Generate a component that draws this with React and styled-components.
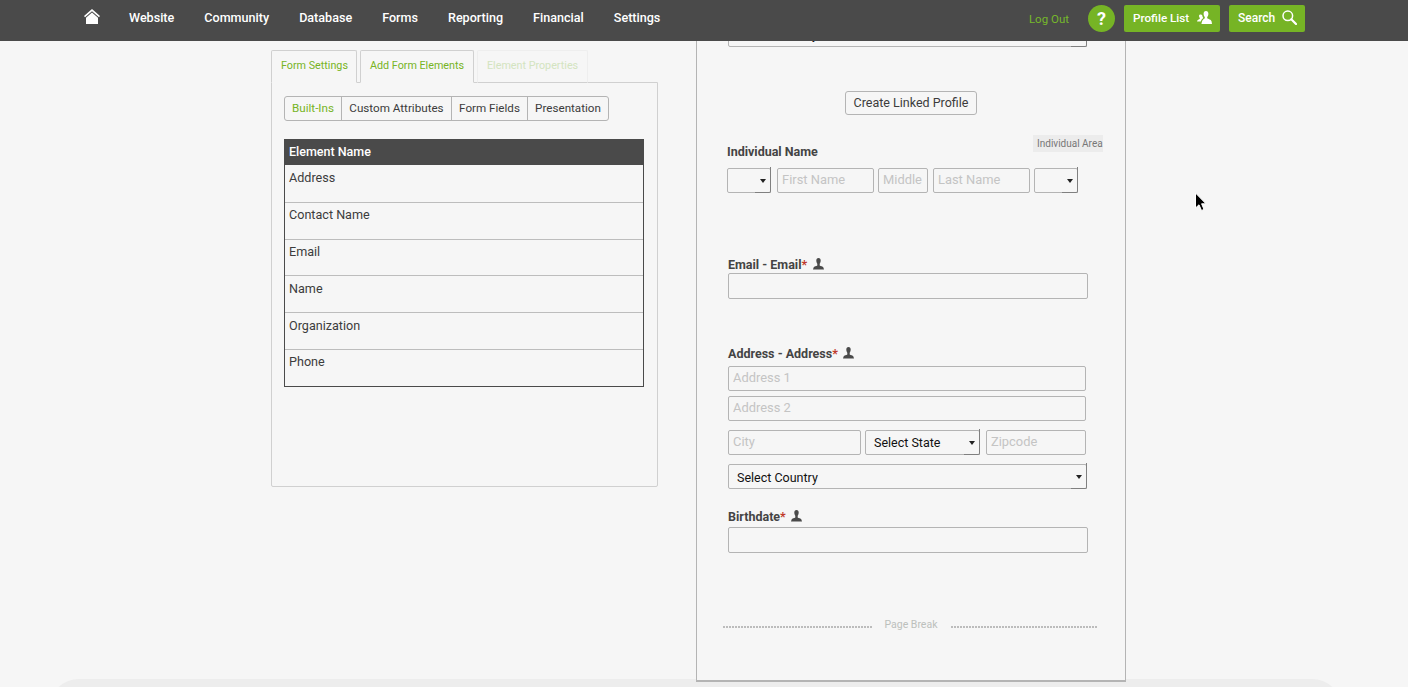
import React from "react";
import styled, { createGlobalStyle } from "styled-components";

const Global = createGlobalStyle`
  html, body { margin: 0; padding: 0; background: #f6f6f6; }
  * { box-sizing: border-box; }
  body { font-family: Roboto, "Liberation Sans", sans-serif; color: #3c3c3c; }
`;

const Page = styled.div`
  position: relative;
  height: 687px;
  overflow: hidden;
  background: #f6f6f6;
`;

const Header = styled.header`
  position: relative;
  z-index: 2;
  height: 41px;
  background: #4a4a4a;
  display: flex;
  align-items: flex-start;
  justify-content: space-between;
  padding: 5px 103px 0 84px;
`;

const NavList = styled.nav`
  display: flex;
  align-items: center;
  height: 25px;
  gap: 30px;
`;

const HomeLink = styled.span`
  display: flex;
  width: 16px;
  margin-right: -1px;
  margin-top: -2px;
`;

const NavLink = styled.span`
  font-size: 12.58px;
  font-weight: 500;
  color: #fff;
`;

const Actions = styled.div`
  display: flex;
  align-items: center;
`;

const LogOut = styled.span`
  font-size: 11.5px;
  color: #76b82a;
  margin-right: 19px;
`;

const Help = styled.span`
  width: 27px;
  height: 27px;
  border-radius: 50%;
  background: #76b425;
  color: #fff;
  font-size: 18px;
  font-weight: 700;
  display: flex;
  align-items: center;
  justify-content: center;
  margin-right: 9px;
`;

const GreenButton = styled.span`
  height: 27px;
  width: ${(p) => p.$w}px;
  margin-left: ${(p) => p.$ml || 0}px;
  background: #76b425;
  border-radius: 2px;
  color: #fff;
  font-size: ${(p) => p.$fs}px;
  font-weight: 500;
  display: flex;
  align-items: center;
  padding: 0 0 2px 9px;
  gap: ${(p) => p.$gap}px;
`;

const Main = styled.main`
  display: flex;
  align-items: flex-start;
  height: 638px;
  padding-left: 271px;
  gap: 38px;
`;

const LeftColumn = styled.section`
  width: 387px;
  padding-top: 9px;
`;

const TabRow = styled.div`
  display: flex;
  gap: 3px;
`;

const Tab = styled.div`
  position: relative;
  height: 33px;
  width: ${(p) => p.$w}px;
  margin-bottom: -1px;
  padding: 0 0 2px ${(p) => p.$pl}px;
  display: flex;
  align-items: center;
  font-size: 10.75px;
  color: ${(p) => (p.$disabled ? "#d3e4c0" : "#76b425")};
  border: 1px solid ${(p) => (p.$disabled ? "#eeeeee" : "#d0d0d0")};
  border-bottom-color: ${(p) => (p.$disabled ? "#d0d0d0" : "#f6f6f6")};
  border-radius: 2px 2px 0 0;
`;

const SettingsPanel = styled.div`
  height: 405px;
  border: 1px solid #d0d0d0;
  border-radius: 0 0 2px 2px;
  padding: 13px 13px 0 12px;
`;

const SubTabs = styled.div`
  display: inline-flex;
  height: 25px;
  border: 1px solid #b4b4b4;
  border-radius: 3px;
`;

const SubTab = styled.span`
  width: ${(p) => p.$w}px;
  display: flex;
  align-items: center;
  justify-content: center;
  padding-bottom: 1px;
  font-size: 11.65px;
  color: ${(p) => (p.$active ? "#76b425" : "#3c3c3c")};
  border-left: ${(p) => (p.$first ? "none" : "1px solid #b4b4b4")};
`;

const ElementTable = styled.div`
  margin-top: 18px;
  width: 360px;
  border: 1px solid #4a4a4a;
  border-top: none;
`;

const TableHead = styled.div`
  height: 26px;
  margin: 0 -1px;
  background: #4a4a4a;
  color: #fff;
  font-size: 12.5px;
  font-weight: 500;
  line-height: 26px;
  padding-left: 5px;
`;

const TableRow = styled.div`
  height: 36.8px;
  padding: ${(p) => (p.$first ? 5 : 4.4)}px 0 0 4px;
  font-size: 12.6px;
  line-height: 15px;
  color: #3c3c3c;
  border-top: ${(p) => (p.$first ? "none" : "1px solid #bdbdbd")};
`;

const FormPanel = styled.section`
  position: relative;
  z-index: 1;
  width: 430px;
  height: 641px;
  flex: none;
  border: 1px solid #b4b4b4;
  border-top: none;
  border-bottom-width: 2px;
  background: #f6f6f6;
  padding-left: 31px;
  display: flex;
  flex-direction: column;
  align-items: flex-start;
`;

const SelectBox = styled.div`
  position: relative;
  flex: none;
  width: ${(p) => p.$w}px;
  height: 25px;
  margin-top: ${(p) => p.$mt || 0}px;
  margin-left: ${(p) => p.$ml || 0}px;
  border: 1px solid #b4b4b4;
  border-radius: 2px;
  display: flex;
  align-items: center;
  padding: ${(p) => p.$pt || 0}px 0 0 8px;
  font-size: 12.5px;
  color: #111;
  &::after {
    content: "";
    position: absolute;
    right: -1px;
    bottom: -1px;
    width: 15px;
    height: 25px;
    border-right: 1px solid #808080;
    border-bottom: 1px solid #808080;
    border-radius: 0 0 2px 0;
  }
  &::before {
    content: "";
    position: absolute;
    right: 4px;
    top: 10px;
    border-left: 3px solid transparent;
    border-right: 3px solid transparent;
    border-top: 4px solid #222;
  }
`;

const CenterButton = styled.button`
  align-self: flex-start;
  margin: 44px 0 0 117px;
  width: 132px;
  height: 24px;
  background: #f6f6f6;
  border: 1px solid #b4b4b4;
  border-radius: 3px;
  font-family: inherit;
  font-size: 12.5px;
  color: #3c3c3c;
  padding: 0 0 2px;
`;

const NameHead = styled.div`
  width: 376px;
  height: 25px;
  margin: 20px 0 0 -1px;
  display: flex;
  justify-content: space-between;
`;

const Label = styled.div`
  font-size: 12.5px;
  font-weight: 700;
  line-height: 16px;
  color: #444;
  display: flex;
  align-items: center;
  gap: 5.5px;
  margin-top: ${(p) => p.$mt || 0}px;
  align-self: ${(p) => (p.$end ? "flex-end" : "auto")};
  svg { margin-top: -2px; }
`;

const Required = styled.span`
  color: #c0392b;
  margin-left: -5.5px;
`;

const AreaTag = styled.span`
  width: 70px;
  height: 17px;
  background: #ececec;
  font-size: 10px;
  line-height: 17px;
  padding-left: 4px;
  color: #777;
  white-space: nowrap;
`;

const NameRow = styled.div`
  display: flex;
  margin: 8px 0 0 -1px;
`;

const TextInput = styled.input`
  display: block;
  flex: none;
  width: ${(p) => p.$w}px;
  height: ${(p) => p.$h || 25}px;
  margin-top: ${(p) => p.$mt || 0}px;
  margin-left: ${(p) => p.$ml || 0}px;
  background: transparent;
  border: 1px solid #b4b4b4;
  border-radius: 2px;
  padding: 0 4px 2px;
  font-family: inherit;
  font-size: 12.9px;
  &::placeholder { color: #c4c4c4; opacity: 1; }
`;

const CityRow = styled.div`
  display: flex;
  margin-top: 9px;
`;

const BreakRow = styled.div`
  margin: 64px 0 0 -5px;
  width: 374px;
  display: flex;
  align-items: center;
`;

const Dots = styled.span`
  flex: none;
  width: ${(p) => p.$w}px;
  height: 2px;
  margin-top: 4px;
  background-image: repeating-linear-gradient(90deg, #bcbcbc 0 2px, transparent 2px 3px);
`;

const BreakText = styled.span`
  flex: none;
  width: 78px;
  padding-right: 2px;
  text-align: center;
  font-size: 10.5px;
  line-height: 16px;
  color: #bcc0bc;
`;

const FooterBand = styled.div`
  height: 30px;
  margin: 0 66px 0 49px;
  background: #ededed;
  border-radius: 30px 30px 0 0;
`;

const Cursor = styled.svg`
  position: absolute;
  left: 1194px;
  top: 192px;
  z-index: 3;
`;

const PersonIcon = () => (
  <svg width="11" height="12" viewBox="0 0 11 12" fill="#4a4a4a">
    <path d="M5.5 0C7 0 7.7 1 7.7 2.6 7.7 4 7.1 5.2 6.7 5.8V7.4C7.4 8 10 8.2 10.4 9.4L11 11.5H0L.6 9.4C1 8.2 3.6 8 4.3 7.4V5.8C3.9 5.2 3.3 4 3.3 2.6 3.3 1 4 0 5.5 0Z" />
  </svg>
);

const HomeIcon = () => (
  <svg width="16" height="15" viewBox="0 0 16 15" fill="#fff">
    <path d="M8 0L16 7 15 8.2 8 2.2 1 8.2 0 7Z" />
    <path d="M8 3.6L14 8.7V15H2V8.7Z" />
  </svg>
);

const ProfilesIcon = () => (
  <svg width="15" height="14" viewBox="0 0 15 14" fill="#fff">
    <path d="M9 0C10.6 0 11.4 1.2 11.4 2.8 11.4 4.2 10.8 5.4 10.2 6V7.2C11 8 14.4 8.5 14.6 10.6L15 13H4.4L5 10.6C5.2 8.6 7.2 8 7.8 7.2V6C7.2 5.4 6.6 4.2 6.6 2.8 6.6 1.2 7.4 0 9 0Z" />
    <path d="M3.8 3.6C4.4 3.6 5 3.9 5.3 4.4 5.4 5.6 5.8 6.4 6.3 7 5 8 4.2 9 3.8 10.6H0C0 9 2.2 8.4 2.8 7.8V7C2.3 6.4 2 5.6 2 4.9 2 4 2.8 3.6 3.8 3.6Z" />
  </svg>
);

const SearchIcon = () => (
  <svg width="15" height="15" viewBox="0 0 15 15" fill="none" stroke="#fff">
    <circle cx="5.8" cy="5.8" r="4.8" strokeWidth="1.5" />
    <path d="M9.3 9.3L14 14" strokeWidth="2.2" strokeLinecap="round" />
  </svg>
);

const rows = ["Address", "Contact Name", "Email", "Name", "Organization", "Phone"];
const navItems = ["Website", "Community", "Database", "Forms", "Reporting", "Financial", "Settings"];

export default function App() {
  return (
    <>
      <Global />
      <Page>
        <Header>
          <NavList>
            <HomeLink><HomeIcon /></HomeLink>
            {navItems.map((n) => <NavLink key={n}>{n}</NavLink>)}
          </NavList>
          <Actions>
            <LogOut>Log Out</LogOut>
            <Help>?</Help>
            <GreenButton $w={96} $gap={8} $fs={11.7}>Profile List <ProfilesIcon /></GreenButton>
            <GreenButton $w={76} $ml={9} $gap={7} $fs={12}>Search <SearchIcon /></GreenButton>
          </Actions>
        </Header>
        <Main>
          <LeftColumn>
            <TabRow>
              <Tab $w={86} $pl={9}>Form Settings</Tab>
              <Tab $w={114} $pl={9}>Add Form Elements</Tab>
              <Tab $w={111} $pl={9} $disabled>Element Properties</Tab>
            </TabRow>
            <SettingsPanel>
              <SubTabs>
                <SubTab $w={56} $first $active>Built-Ins</SubTab>
                <SubTab $w={110}>Custom Attributes</SubTab>
                <SubTab $w={76}>Form Fields</SubTab>
                <SubTab $w={81}>Presentation</SubTab>
              </SubTabs>
              <ElementTable>
                <TableHead>Element Name</TableHead>
                {rows.map((r, i) => <TableRow key={r} $first={i === 0}>{r}</TableRow>)}
              </ElementTable>
            </SettingsPanel>
          </LeftColumn>
          <FormPanel>
            <SelectBox $w={359} $mt={-19}>Select Country</SelectBox>
            <CenterButton>Create Linked Profile</CenterButton>
            <NameHead>
              <Label $end>Individual Name</Label>
              <AreaTag>Individual Area</AreaTag>
            </NameHead>
            <NameRow>
              <SelectBox $w={44} />
              <TextInput $w={97} $ml={6} placeholder="First Name" />
              <TextInput $w={50} $ml={4} placeholder="Middle" />
              <TextInput $w={97} $ml={5} placeholder="Last Name" />
              <SelectBox $w={44} $ml={4} />
            </NameRow>
            <Label $mt={64}>Email - Email<Required>*</Required><PersonIcon /></Label>
            <TextInput $w={360} $h={26} />
            <Label $mt={47}>Address - Address<Required>*</Required><PersonIcon /></Label>
            <TextInput $w={358} $mt={4} placeholder="Address 1" />
            <TextInput $w={358} $mt={5} placeholder="Address 2" />
            <CityRow>
              <TextInput $w={133} placeholder="City" />
              <SelectBox $w={115} $ml={4}>Select State</SelectBox>
              <TextInput $w={100} $ml={6} placeholder="Zipcode" />
            </CityRow>
            <SelectBox $w={359} $mt={9} $pt={2}>Select Country</SelectBox>
            <Label $mt={20}>Birthdate<Required>*</Required><PersonIcon /></Label>
            <TextInput $w={360} $h={26} $mt={2} />
            <BreakRow>
              <Dots $w={150} />
              <BreakText>Page Break</BreakText>
              <Dots $w={146} />
            </BreakRow>
          </FormPanel>
        </Main>
        <FooterBand />
        <Cursor width="14" height="20" viewBox="0 0 14 20">
          <path d="M1.5 1V16L5 12.8 7.5 18.5 10 17.4 7.6 11.8H12Z" fill="#000" stroke="#fff" strokeWidth="1" />
        </Cursor>
      </Page>
    </>
  );
}
